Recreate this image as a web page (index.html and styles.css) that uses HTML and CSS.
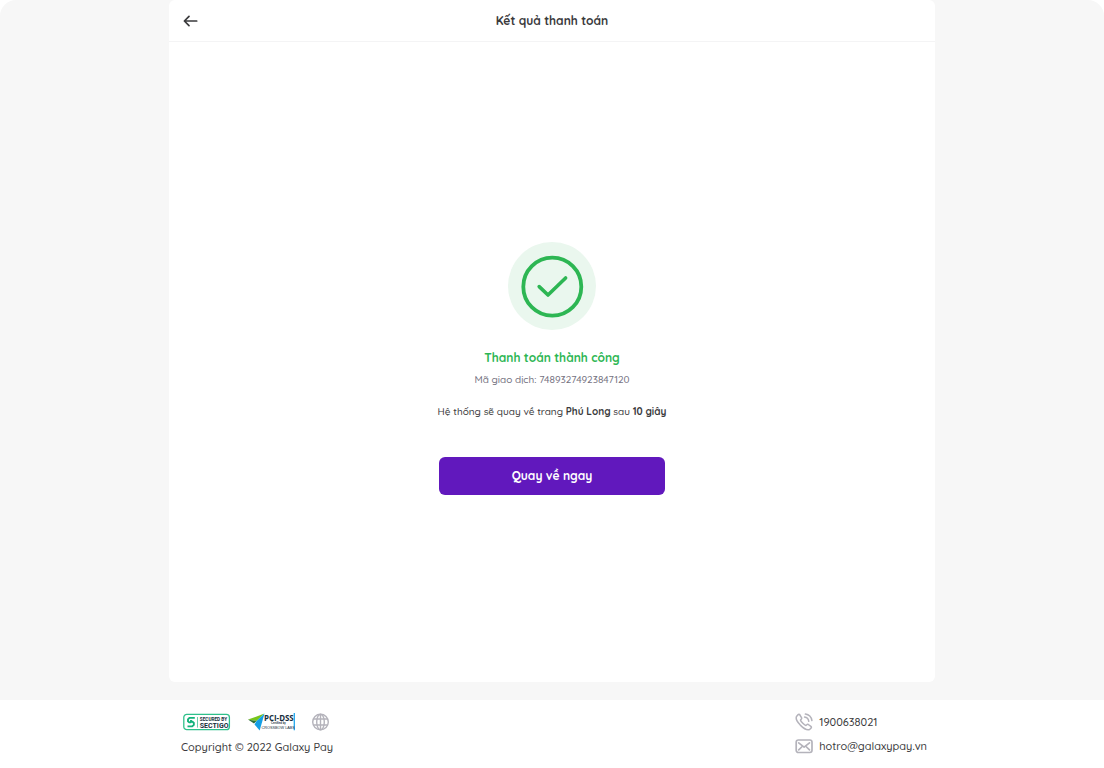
FILE: index.html
```html
<!DOCTYPE html>
<html lang="vi">
<head>
<meta charset="utf-8">
<meta name="viewport" content="width=device-width, initial-scale=1">
<title>Kết quả thanh toán</title>
<link rel="stylesheet" href="styles.css">
</head>
<body>
<div class="page">
  <main class="stage">
    <section class="card">
      <header class="card-header">
        <button class="back" type="button" aria-label="Quay lại">
          <svg width="16" height="16" viewBox="0 0 16 16" fill="none" stroke="#3a3a3c" stroke-width="1.7" stroke-linecap="round" stroke-linejoin="round"><path d="M13.700 8H1.500M6 3.400L1.400 8l4.600 4.600"/></svg>
        </button>
        <h1 class="title">Kết quả thanh toán</h1>
      </header>
      <div class="result">
        <svg class="badge" width="88" height="88" viewBox="0 0 88 88" fill="none">
          <circle cx="44" cy="44" r="44" fill="#eaf7ee"/>
          <circle cx="44.3" cy="44.700" r="29" stroke="#2db653" stroke-width="3.8"/>
          <path d="M31.2 44.6L40 53L57.6 36" stroke="#2db653" stroke-width="3.6" stroke-linecap="round" stroke-linejoin="round"/>
        </svg>
        <h2 class="status">Thanh toán thành công</h2>
        <p class="code">Mã giao dịch: 74893274923847120</p>
        <p class="note">Hệ thống sẽ quay về trang <strong>Phú Long</strong> sau <strong>10 giây</strong></p>
        <button class="primary" type="button">Quay về ngay</button>
      </div>
    </section>
  </main>
  <footer class="footer">
    <div class="footer-inner">
      <div class="about">
        <div class="logos">
          <svg class="sectigo" width="48" height="18" viewBox="0 0 48 18" role="img" aria-label="Secured by Sectigo">
            <rect x="0.8" y="1.3" width="45.600" height="15.4" rx="3" fill="#fff" stroke="#2fc08a" stroke-width="1.3"/>
            <path d="M11.800 4.900H6.400L5 6.300V8.300L6.300 9.400H8.300M4.500 13.400H9.200L10.800 11.900V9.900L9.500 8.700H8V6.900" fill="none" stroke="#13b27b" stroke-width="1.9"/>
            <path d="M14.5 4v10.6" stroke="#6cceaa"/>
            <text class="mark mark-roboto" x="16.800" y="7.800" font-size="4.700">SECURED BY</text>
            <text class="mark mark-roboto" x="16.800" y="14.500" font-size="7">SECTIGO</text>
          </svg>
          <svg class="pci" width="48" height="18" viewBox="0 0 48 18" role="img" aria-label="PCI-DSS certified by Crossbow Labs">
            <path d="M1 6.6L17.5 0.5L9.5 8Z" fill="#78c51c"/>
            <path d="M1 6.6L9.5 8L7 10.4Z" fill="#2d6d38"/>
            <path d="M17.5 0.5L9.500 8L7.500 11.5L12.700 17.5Z" fill="#149fe5"/>
            <path d="M47.300 0v17.300" stroke="#20a7ed" stroke-width="1.3"/>
            <text class="mark mark-open" x="17" y="8" font-size="7.900">PCI-DSS</text>
            <text class="mark" x="24" y="11.4" font-size="2.7">Certified by</text>
            <text class="mark mark-light" x="14.500" y="16.200" font-size="3.800">CROSSBOW LABS</text>
          </svg>
          <button class="language" type="button" aria-label="Ngôn ngữ">
            <svg width="18" height="18" viewBox="0 0 18 18" fill="none" stroke="#b4b3bb" stroke-width="1.4"><circle cx="9.500" cy="9" r="7.8"/><ellipse cx="9.500" cy="9" rx="3.8" ry="7.8"/><path d="M9.500 1.2v15.6M2.300 6h14.400M2.300 12h14.400"/></svg>
          </button>
        </div>
        <p class="copyright">Copyright © 2022 Galaxy Pay</p>
      </div>
      <address class="contact">
        <a class="contact-link" href="tel:1900638021">
          <svg width="18" height="18" viewBox="0 0 18 18" fill="none" stroke="#b4b3bb" stroke-width="1.5" stroke-linecap="round" stroke-linejoin="round"><path d="M4.6 1.5Q3.7 1 2.8 1.9L1.7 3.2C.5 5 1.6 8.200 5.300 12.100C9.200 16 12.800 17.500 14.800 16.300L16 15.100Q16.800 14.200 15.900 13.400L13.300 11.500Q12.500 11 11.700 11.800L10.900 12.500C9.800 12.400 5.600 8.200 5.500 7.100L6.200 6.300Q7 5.500 6.500 4.600ZM9.600 4.100Q13.200 4.600 13.800 8.300M10.400 1.100Q15.900 2 16.900 7.500"/></svg>
          <span>1900638021</span>
        </a>
        <a class="contact-link" href="mailto:hotro@galaxypay.vn">
          <svg width="18" height="18" viewBox="0 0 18 18" fill="none" stroke="#b4b3bb" stroke-width="1.7" stroke-linecap="round" stroke-linejoin="round"><rect x="1.200" y="3" width="15.800" height="12.500" rx="2.200"/><path d="M3.700 5.800L9.100 10.200L14.500 5.800M3.700 12.900L6.700 10M14.500 12.900L11.500 10"/></svg>
          <span>hotro@galaxypay.vn</span>
        </a>
      </address>
    </div>
  </footer>
</div>
</body>
</html>
```

FILE: styles.css
```css
* {
  box-sizing: border-box;
}

body,
h1,
h2,
p {
  margin: 0;
}

body {
  background: #fff;
  color: #3a3a3c;
  font-family: Quicksand, Lato, "Noto Sans", sans-serif;
  font-size: 11px;
  line-height: 16px;
  font-weight: 500;
}

button {
  padding: 0;
  border: 0;
  background: none;
  font: inherit;
  cursor: pointer;
}

svg {
  display: block;
  flex: none;
}

.page {
  display: flex;
  flex-direction: column;
  min-height: 100vh;
}

.stage {
  display: flex;
  flex: 1;
  justify-content: center;
  padding-bottom: 18px;
  background: #f7f7f7;
  border-radius: 16px 16px 0 0;
}

.card {
  display: flex;
  flex-direction: column;
  width: 100%;
  max-width: 766px;
  background: #fff;
  border-radius: 6px;
}

.card-header {
  display: grid;
  grid-template-columns: 16px 1fr 16px;
  align-items: center;
  padding: 13px 14px 12px;
  border-bottom: 1px solid #f4f4f5;
}

.title {
  font-size: 12px;
  line-height: 16px;
  font-weight: 700;
  text-align: center;
}

.result {
  display: flex;
  flex: 1;
  flex-direction: column;
  align-items: center;
  justify-content: center;
  padding: 24px 16px 12px;
  text-align: center;
}

.status {
  margin-top: 20px;
  color: #2db653;
  font-size: 12px;
  line-height: 16px;
  font-weight: 700;
}

.code {
  margin-top: 6px;
  color: #75727f;
  font-size: 10px;
}

.note {
  margin-top: 16px;
  font-size: 10px;
}

.note strong {
  font-weight: 700;
}

.primary {
  width: 226px;
  max-width: 100%;
  margin-top: 37px;
  padding: 11px 16px;
  border-radius: 6px;
  background: #6118bd;
  color: #fff;
  font-size: 12px;
  line-height: 16px;
  font-weight: 700;
}

.footer-inner {
  display: flex;
  flex-wrap: wrap;
  justify-content: space-between;
  gap: 16px;
  max-width: 766px;
  margin: 0 auto;
  padding: 13px 8px 13px 12px;
}

.about,
.contact {
  display: flex;
  flex-direction: column;
  gap: 6px;
}

.about {
  gap: 8px;
}

.logos {
  display: flex;
  align-items: center;
  gap: 16px;
  padding-left: 2px;
}

.mark {
  fill: #172d3b;
  font-family: "Liberation Sans", sans-serif;
  font-weight: 700;
}

.mark-roboto {
  font-family: Roboto, sans-serif;
}

.mark-open {
  font-family: "Open Sans", sans-serif;
}

.mark-light {
  font-weight: 400;
}

.contact {
  font-style: normal;
}

.contact-link {
  display: flex;
  align-items: center;
  gap: 6px;
  color: inherit;
  text-decoration: none;
}
```
